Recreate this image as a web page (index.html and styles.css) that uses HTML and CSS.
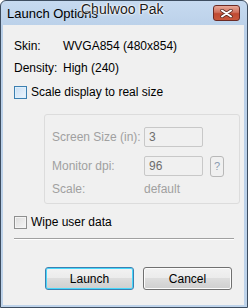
FILE: index.html
```html
<!DOCTYPE html>
<html lang="en">
<head>
  <meta charset="UTF-8">
  <title>Launch Options</title>
  <link rel="stylesheet" href="styles.css">
</head>
<body>
  <div class="window">
    <div class="titlebar">
      <span class="title">Launch Options</span>
      <span class="close">
        <svg width="13" height="9" viewBox="0 0 13 9">
          <path d="M2 1.5 L11 7.5 M11 1.5 L2 7.5" stroke="#5a2a22" stroke-width="3.4" stroke-linecap="round"/>
          <path d="M2 1.5 L11 7.5 M11 1.5 L2 7.5" stroke="#fff" stroke-width="2" stroke-linecap="round"/>
        </svg>
      </span>
      <span class="watermark">Chulwoo Pak</span>
    </div>

    <div class="client">
      <div class="row first">
        <span class="key">Skin:</span>
        <span>WVGA854 (480x854)</span>
      </div>
      <div class="row">
        <span class="key">Density:</span>
        <span>High (240)</span>
      </div>

      <label class="check">
        <span class="box hot"></span>
        Scale display to real size
      </label>

      <div class="group">
        <div class="field">
          <span class="flabel">Screen Size (in):</span>
          <span class="input">3</span>
        </div>
        <div class="field">
          <span class="flabel">Monitor dpi:</span>
          <span class="input">96</span>
          <span class="help">?</span>
        </div>
        <div class="field scale">
          <span class="flabel">Scale:</span>
          <span>default</span>
        </div>
      </div>

      <label class="check wipe">
        <span class="box"></span>
        Wipe user data
      </label>

      <div class="separator"></div>

      <div class="buttons">
        <button class="btn default">Launch</button>
        <button class="btn">Cancel</button>
      </div>
    </div>
  </div>
</body>
</html>
```

FILE: styles.css
```css
body {
  margin: 0;
  font-family: "Liberation Sans", Arial, sans-serif;
  font-size: 12px;
  color: #000;
  background: #fff;
}

.window {
  width: 246px;
  height: 306px;
  border: 1px solid #3d4d60;
  border-radius: 6px 6px 0 0;
  background: linear-gradient(#c6daf0, #b9cfe8 30px, #bed3ea);
  display: flex;
  flex-direction: column;
}

.titlebar {
  position: relative;
  height: 24px;
  display: flex;
  align-items: flex-start;
}

.title {
  margin: 5px 0 0 6px;
  font-size: 13px;
  color: #000;
}

.close {
  margin: 4px 7px 0 auto;
  width: 25px;
  height: 14px;
  border: 1px solid #6b2a24;
  border-radius: 3px;
  background: linear-gradient(#e8a898, #d0705c 45%, #c04a32 55%, #c8583c);
  display: flex;
  align-items: center;
  justify-content: center;
}

.watermark {
  position: absolute;
  left: 80px;
  top: 0;
  font-size: 14px;
  color: #1a1a1a;
  text-shadow: 0 0 3px #fff, 0 0 2px #fff, 0 0 1px #fff;
}

.client {
  flex: 1;
  margin: 0 3px 2px 2px;
  background: #f0f0f0;
  padding: 0 11px;
  display: flex;
  flex-direction: column;
}

.row {
  display: flex;
  height: 14px;
  line-height: 14px;
  margin-top: 8px;
}

.row.first {
  margin-top: 14px;
}

.key {
  width: 49px;
}

.check {
  display: flex;
  align-items: center;
  gap: 4px;
  height: 14px;
  margin-top: 10px;
}

.box {
  width: 11px;
  height: 11px;
  border: 1px solid #8e8f8f;
  background: linear-gradient(135deg, #dcdcdc, #f6f6f6);
  box-shadow: inset 0 0 0 1px #f4f4f4;
}

.box.hot {
  border-color: #3c7fb1;
  background: linear-gradient(135deg, #c8def4, #eef5fc);
  box-shadow: inset 0 0 0 1px #def0fc;
}

.group {
  margin: 15px 0 0 30px;
  width: 187px;
  border: 1px solid #dcdcdc;
  border-radius: 3px;
  padding: 0 0 7px 7px;
  color: #a0a0a0;
  display: flex;
  flex-direction: column;
}

.field {
  display: flex;
  align-items: center;
  height: 20px;
  margin-top: 12px;
}

.field + .field {
  margin-top: 9px;
}

.field.scale {
  margin-top: 6px;
  height: 14px;
}

.flabel {
  width: 92px;
}

.input {
  width: 53px;
  height: 18px;
  line-height: 18px;
  border: 1px solid #c8c8c8;
  border-radius: 2px;
  padding-left: 4px;
  color: #6d6d6d;
}

.help {
  margin-left: 7px;
  width: 12px;
  height: 19px;
  line-height: 19px;
  border: 1px solid #b8b8b8;
  border-radius: 3px;
  text-align: center;
  color: #8a9cb0;
  font-size: 11px;
}

.check.wipe {
  margin-top: 11px;
}

.separator {
  margin-top: 9px;
  height: 0;
  border-top: 1px solid #a0a0a0;
  border-bottom: 1px solid #fff;
  width: 220px;
}

.buttons {
  display: flex;
  gap: 9px;
  margin: 27px 0 0 31px;
}

.btn {
  width: 89px;
  height: 23px;
  font-family: "Liberation Sans", Arial, sans-serif;
  font-size: 12px;
  color: #000;
  border: 1px solid #707070;
  border-radius: 3px;
  background: linear-gradient(#f2f2f2, #ebebeb 50%, #dddddd 50%, #cfcfcf);
  box-shadow: inset 0 0 0 1px #fcfcfc;
  padding: 0;
}

.btn.default {
  border-color: #3c7fb1;
  box-shadow: inset 0 0 0 1px #48d8fb;
}
```
